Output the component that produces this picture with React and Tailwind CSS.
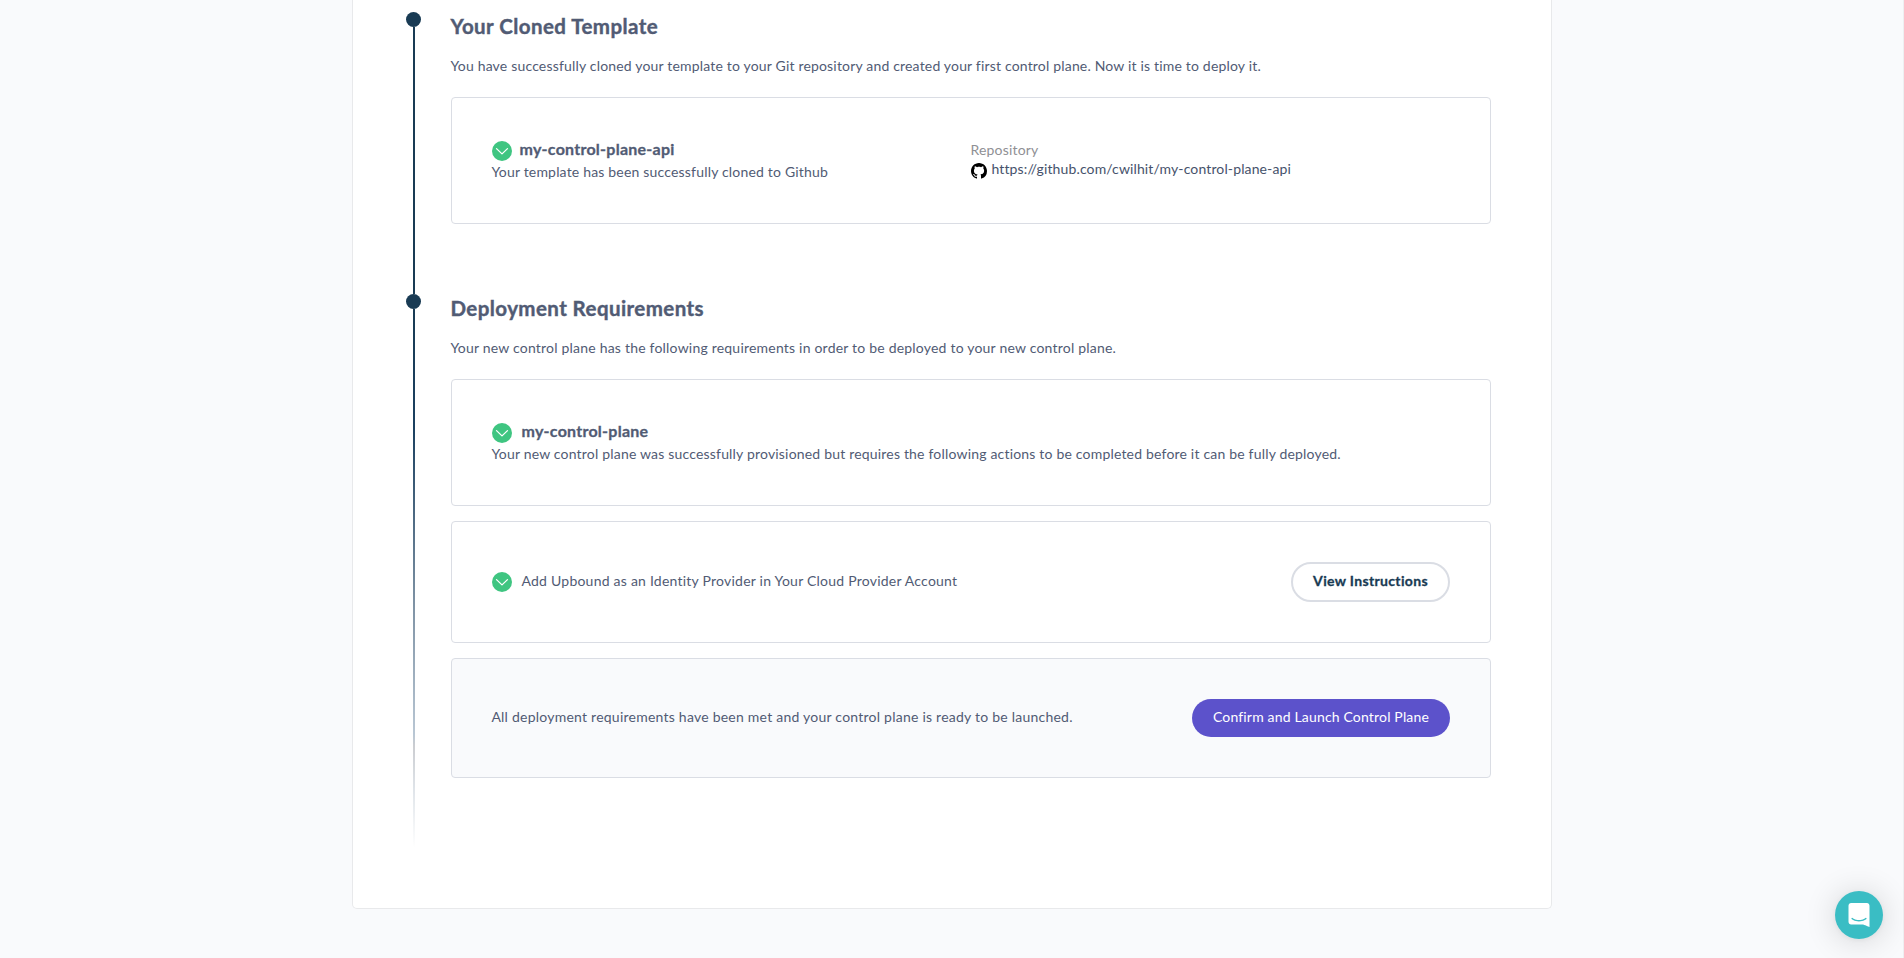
import React from "react";

function CheckIcon({ className = "" }) {
  return (
    <svg viewBox="0 0 20 20" className={"h-5 w-5 shrink-0 " + className} fill="none">
      <circle cx="10" cy="10" r="10" fill="#3fc581" />
      <path d="M4.5 7.6 10 12.9l5.5-5.3" stroke="#fff" strokeWidth="1.3" strokeLinecap="round" strokeLinejoin="round" />
    </svg>
  );
}

function GithubIcon() {
  return (
    <svg viewBox="0 0 16 16" className="mt-1 h-4 w-4 shrink-0" fill="#000">
      <path
        fillRule="evenodd"
        d="M8 0C3.58 0 0 3.58 0 8c0 3.54 2.29 6.53 5.47 7.59.4.07.55-.17.55-.38 0-.19-.01-.82-.01-1.49-2.01.37-2.53-.49-2.69-.94-.09-.23-.48-.94-.82-1.13-.28-.15-.68-.52-.01-.53.63-.01 1.08.58 1.23.82.72 1.21 1.87.87 2.33.66.07-.52.28-.87.51-1.07-1.78-.2-3.64-.89-3.64-3.95 0-.87.31-1.59.82-2.15-.08-.2-.36-1.02.08-2.12 0 0 .67-.21 2.2.82.64-.18 1.32-.27 2-.27s1.36.09 2 .27c1.53-1.04 2.2-.82 2.2-.82.44 1.1.16 1.92.08 2.12.51.56.82 1.27.82 2.15 0 3.07-1.87 3.75-3.65 3.95.29.25.54.73.54 1.48 0 1.07-.01 1.93-.01 2.2 0 .21.15.46.55.38A8.01 8.01 0 0 0 16 8c0-4.42-3.58-8-8-8z"
      />
    </svg>
  );
}

function Step({ className = "", line, title, titleTracking, text, textTracking, children }) {
  return (
    <section className={"flex " + className}>
      <div className="ml-[53.4px] flex w-[15px] flex-col items-center">
        <div className="h-[15px] w-[15px] shrink-0 rounded-full bg-[#193b54]" />
        <div className={"w-[2px] flex-1 " + line} />
      </div>
      <div className="ml-[29.6px] w-[1040px]">
        <h2 className={"-ml-[0.5px] mt-[2px] text-[20.5px] leading-6 font-bold [-webkit-text-stroke:0.4px_#515b74] " + titleTracking}>
          {title}
        </h2>
        <p className={"-ml-[0.6px] mt-[18px] text-sm leading-5 " + textTracking}>{text}</p>
        <div className="mt-[21px] flex flex-col gap-[15px]">{children}</div>
      </div>
    </section>
  );
}

function Card({ className = "", children }) {
  return <div className={"flex rounded-[4px] border border-[#dadde4] px-10 " + className}>{children}</div>;
}

export default function App() {
  return (
    <div className="h-[958px] overflow-hidden border-r border-[#eeeff1] bg-[#f9fafc] font-['Lato',sans-serif] text-[#515b74]">
      <main className="ml-[352px] h-[909px] w-[1200px] rounded-b-[5px] border border-t-0 border-[#e8e9eb] bg-white pt-3 whitespace-nowrap">
        <Step
          className="h-[282px]"
          line="bg-[#193b54]"
          title="Your Cloned Template"
          titleTracking="tracking-[0.44px]"
          text="You have successfully cloned your template to your Git repository and created your first control plane. Now it is time to deploy it."
          textTracking="tracking-[0.18px]"
        >
          <Card className="h-[127px] pt-10">
            <div className="w-[479px]">
              <div className="flex h-6 gap-[7.5px]">
                <CheckIcon className="mt-[3px]" />
                <h3 className="text-base leading-[22px] font-bold tracking-[0.25px] [-webkit-text-stroke:0.3px_#515b74]">
                  my-control-plane-api
                </h3>
              </div>
              <p className="-ml-[0.6px] text-sm leading-5 tracking-[0.185px]">
                Your template has been successfully cloned to Github
              </p>
            </div>
            <div>
              <div className="-ml-[0.6px] mt-[2px] text-sm leading-[19px] tracking-[0.2px] text-[#8f9094]">Repository</div>
              <div className="flex gap-[4.5px]">
                <GithubIcon />
                <span className="text-sm leading-[19px] tracking-[0.125px] text-[#46526b]">
                  https://github.com/cwilhit/my-control-plane-api
                </span>
              </div>
            </div>
          </Card>
        </Step>

        <Step
          className="h-[554px]"
          line="bg-[linear-gradient(to_bottom,#193b54_0%,#1b4060_22%,#7f93a5_55%,#b9c7d4_79%,#cbcdd1_81%,#dfe4e9_89%,#ffffff_100%)]"
          title="Deployment Requirements"
          titleTracking="tracking-[0.42px]"
          text="Your new control plane has the following requirements in order to be deployed to your new control plane."
          textTracking="tracking-[0.207px]"
        >
          <Card className="h-[127px] flex-col pt-10">
            <div className="flex h-6 gap-[9.5px]">
              <CheckIcon className="mt-[3px]" />
              <h3 className="text-base leading-[22px] font-bold tracking-[0.25px] [-webkit-text-stroke:0.3px_#515b74]">
                my-control-plane
              </h3>
            </div>
            <p className="-ml-[0.6px] text-sm leading-5 tracking-[0.188px]">
              Your new control plane was successfully provisioned but requires the following actions to be completed
              before it can be fully deployed.
            </p>
          </Card>
          <Card className="h-[122px] items-center">
            <CheckIcon />
            <p className="ml-[9.5px] pb-[2px] text-sm leading-5 tracking-[0.23px]">
              Add Upbound as an Identity Provider in Your Cloud Provider Account
            </p>
            <button className="ml-auto h-10 w-[159px] rounded-full border-2 border-[#dadde4] bg-white pb-[2px] text-sm font-bold tracking-[0.34px] text-[#193b54] [-webkit-text-stroke:0.3px_#193b54]">
              View Instructions
            </button>
          </Card>
          <Card className="h-[120px] items-center bg-[#f9fafc]">
            <p className="-ml-[0.6px] pb-[2px] text-sm leading-5 tracking-[0.235px]">
              All deployment requirements have been met and your control plane is ready to be launched.
            </p>
            <button className="ml-auto h-[38px] w-[258px] rounded-full bg-[#5c52cb] pb-[2px] text-sm tracking-[0.17px] text-white">
              Confirm and Launch Control Plane
            </button>
          </Card>
        </Step>
      </main>

      <button
        aria-label="Open chat"
        className="fixed right-[21px] bottom-[19px] flex h-12 w-12 items-center justify-center rounded-full bg-[#3abdc4] shadow-[0_1px_6px_rgba(0,0,0,0.06),0_2px_32px_rgba(0,0,0,0.16)]"
      >
        <svg viewBox="0 0 28 32" className="h-6 w-[22px]" fill="#fff">
          <path d="M28 32s-4.714-1.855-8.527-3.34H3.437C1.54 28.66 0 27.026 0 25.013V3.644C0 1.633 1.54 0 3.437 0h21.125c1.898 0 3.437 1.632 3.437 3.645v18.404H28V32zm-4.139-11.982a.88.88 0 00-1.292-.105c-.03.026-3.015 2.681-8.57 2.681-5.486 0-8.517-2.636-8.571-2.684a.88.88 0 00-1.29.107 1.01 1.01 0 00-.219.708.992.992 0 00.318.664c.142.128 3.537 3.15 9.762 3.15 6.226 0 9.621-3.022 9.763-3.15a.992.992 0 00.317-.664 1.01 1.01 0 00-.218-.707z" />
        </svg>
      </button>
    </div>
  );
}
